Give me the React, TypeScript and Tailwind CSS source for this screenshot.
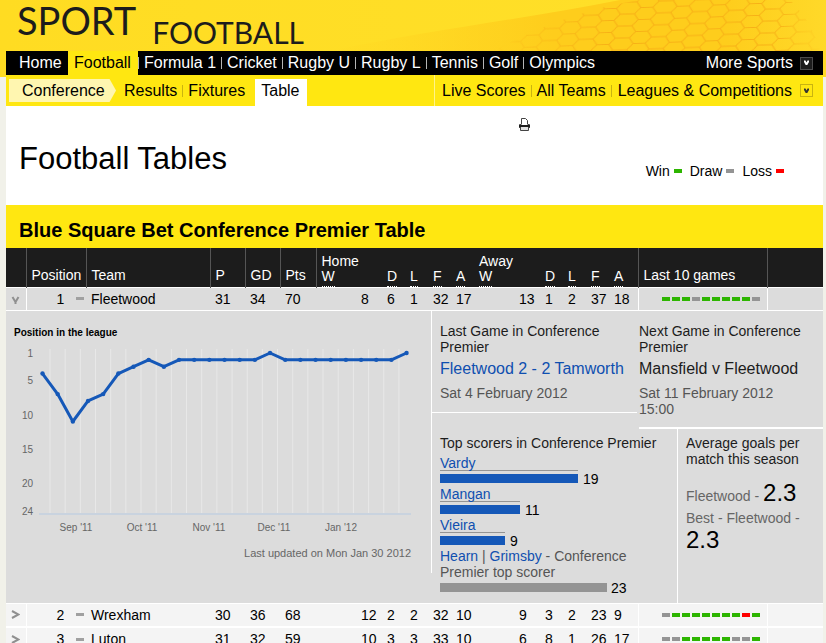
type Result = "W" | "D" | "L";

type Row = {
  position: number;
  team: string;
  stats: number[];
  form: string;
};

const NAV = ["Formula 1", "Cricket", "Rugby U", "Rugby L", "Tennis", "Golf", "Olympics"];

const ROWS: Row[] = [
  { position: 1, team: "Fleetwood", stats: [31, 34, 70, 8, 6, 1, 32, 17, 13, 1, 2, 37, 18], form: "WWWDWWWWWD" },
  { position: 2, team: "Wrexham", stats: [30, 36, 68, 12, 2, 2, 32, 10, 9, 3, 2, 23, 9], form: "DWWWWWWWLW" },
  { position: 3, team: "Luton", stats: [31, 32, 59, 10, 3, 3, 33, 10, 6, 8, 1, 26, 17], form: "DDWWWWWDDW" },
];

const SCORERS = [
  { name: "Vardy", goals: 19 },
  { name: "Mangan", goals: 11 },
  { name: "Vieira", goals: 9 },
];

const POSITIONS = [4, 7, 11, 8, 7, 4, 3, 2, 3, 2, 2, 2, 2, 2, 2, 1, 2, 2, 2, 2, 2, 2, 2, 2, 1];

const RESULT_COLOR: Record<Result, string> = {
  W: "bg-[#2db500]",
  D: "bg-[#949494]",
  L: "bg-[#ff0000]",
};

function Dash({ result }: { result: Result }) {
  return <span className={`inline-block h-1 w-2 ${RESULT_COLOR[result]}`} />;
}

function HexMesh() {
  return (
    <svg className="absolute inset-0 h-full w-full" viewBox="0 0 826 77" preserveAspectRatio="xMaxYMin slice" aria-hidden="true">
      <defs>
        <linearGradient id="swoosh" x1="0" x2="1">
          <stop offset="0" stopColor="#ffd21f" stopOpacity="0" />
          <stop offset="0.45" stopColor="#fecd1c" />
          <stop offset="0.8" stopColor="#fecd1c" />
          <stop offset="1" stopColor="#ffd929" />
        </linearGradient>
        <linearGradient id="fade" x1="0" x2="1">
          <stop offset="0" stopColor="#fff" stopOpacity="0.1" />
          <stop offset="0.35" stopColor="#fff" />
          <stop offset="0.85" stopColor="#fff" />
          <stop offset="1" stopColor="#fff" stopOpacity="0.1" />
        </linearGradient>
        <pattern id="hex" width="36" height="12" patternUnits="userSpaceOnUse" patternTransform="skewX(-14) rotate(-2)">
          <path d="M0 6H6L11 0H25L30 6H36M6 6L11 12H25L30 6" fill="none" stroke="#f7b016" strokeWidth="1" />
        </pattern>
        <mask id="mesh">
          <path d="M495 51C540 25 590 8 640 0H790C805 15 815 32 820 51Z" fill="url(#fade)" />
        </mask>
      </defs>
      <path d="M330 51C430 30 530 18 620 0H826V77H330Z" fill="url(#swoosh)" />
      <rect x="490" width="336" height="51" fill="url(#hex)" mask="url(#mesh)" />
    </svg>
  );
}

function DropButton({ label, dark }: { label: string; dark?: boolean }) {
  return (
    <button
      type="button"
      aria-label={label}
      className={`flex size-[13px] items-center justify-center border ${
        dark ? "border-[#4a4a4a] bg-[#1c1c1c] text-white" : "border-[#c9b410] text-[#333]"
      }`}
    >
      <svg viewBox="0 0 7 6" className="h-1.5 w-[7px]">
        <path d="M1 0.5H2.5L3.5 2.5L4.5 0.5H6V2L4.3 5H2.7L1 2Z" fill="currentColor" />
      </svg>
    </button>
  );
}

function MainNav() {
  return (
    <nav className="flex h-6 items-center bg-black text-[16px] leading-6 text-white">
      <a href="#" className="w-[62px] pl-[13px]">Home</a>
      <a href="#" className="w-[70px] bg-[#ffe711] pl-1.5 text-black">Football</a>
      {NAV.map((item) => (
        <a key={item} href="#" className="flex items-center whitespace-nowrap pr-[5px]">
          <span className="mr-[5px] h-3 w-px bg-[#b5b5b5]" />
          {item}
        </a>
      ))}
      <div className="ml-auto flex items-center gap-[7px] pr-2.5">
        <a href="#">More Sports</a>
        <DropButton label="More sports" dark />
      </div>
    </nav>
  );
}

function SubNav() {
  return (
    <nav className="flex h-[31px] items-start bg-[#ffe711] pt-1 text-[16px] leading-6 text-black">
      <a
        href="#"
        className="ml-[3px] h-[23px] w-[107px] bg-[#fff6b0] pl-[13px] [clip-path:polygon(0_0,94%_0,100%_50%,94%_100%,0_100%)]"
      >
        Conference
      </a>
      <a href="#" className="pl-2 pr-[5px]">Results</a>
      <span className="mt-1.5 h-3 w-px bg-[#c9b410]" />
      <a href="#" className="pl-[5px]">Fixtures</a>
      <a href="#" className="ml-2.5 h-[27px] w-[52px] bg-white pl-1.5">Table</a>
      <div className="-mt-1 ml-auto flex h-[31px] items-center whitespace-nowrap border-l border-[#fff38a] pl-[7px] pr-2.5">
        <a href="#" className="pr-[5px]">Live Scores</a>
        <span className="h-3 w-px bg-[#c9b410]" />
        <a href="#" className="px-[5px]">All Teams</a>
        <span className="h-3 w-px bg-[#c9b410]" />
        <a href="#" className="pl-1.5 pr-2">Leagues &amp; Competitions</a>
        <DropButton label="Leagues and competitions" />
      </div>
    </nav>
  );
}

function PrinterIcon() {
  return (
    <svg viewBox="0 0 11 13" className="h-[13px] w-[11px]">
      <path d="M2.5 6V.5H6.5L8.5 2.5V6" fill="#fff" stroke="#444" />
      <path d="M.5 10V6.5H2.5M8.5 6.5H10.5V10" fill="none" stroke="#444" />
      <rect x="0" y="7" width="11" height="2" fill="#1c1c1c" />
      <path d="M1.5 9V12.5H9.5V9" fill="#e0e0e0" stroke="#444" />
    </svg>
  );
}

function Toggle({ open }: { open?: boolean }) {
  return (
    <svg viewBox="0 0 9 9" className={`size-[9px] ${open ? "translate-y-0.5" : ""}`} fill="none" stroke="currentColor" strokeWidth="2">
      {open ? <path d="M1.5 1L4.5 6L7.5 1M4.5 4V8" /> : <path d="M1 1L7.5 4.5L1 8" />}
    </svg>
  );
}

function PositionChart() {
  const x = (i: number) => 36.5 + i * 15.17;
  const y = (p: number) => 6 + (p - 1) * 6.85;
  const points = POSITIONS.map((p, i) => `${x(i)},${y(p)}`).join(" ");
  const months: [string, number][] = [
    ["Sep '11", 70],
    ["Oct '11", 136],
    ["Nov '11", 203],
    ["Dec '11", 268],
    ["Jan '12", 335],
  ];

  return (
    <svg viewBox="0 0 425 190" className="h-[190px] w-[425px]" role="img" aria-label="Position in the league">
      {POSITIONS.slice(1).map((_, i) => (
        <line key={i} x1={44 + i * 15.17} x2={44 + i * 15.17} y1="2" y2="166" stroke="#e8e8e8" />
      ))}
      <line x1="33" x2="405" y1="167" y2="167" stroke="#c9d3df" strokeWidth="2" />
      <polyline points={points} fill="none" stroke="#1558b8" strokeWidth="3" strokeLinejoin="round" />
      {POSITIONS.map((p, i) => (
        <circle key={i} cx={x(i)} cy={y(p)} r="2.2" fill="#1558b8" />
      ))}
      <g fontSize="10" fill="#666" textAnchor="end">
        {[1, 5, 10, 15, 20, 24].map((p) => (
          <text key={p} x="27" y={y(p) + 4}>{p}</text>
        ))}
      </g>
      <g fontSize="10" fill="#666" textAnchor="middle">
        {months.map(([label, cx]) => (
          <text key={label} x={cx} y="184">{label}</text>
        ))}
      </g>
    </svg>
  );
}

function TeamDetail() {
  return (
    <div className="flex items-start text-[14px] leading-4 text-[#1c1c1c]">
      <div className="w-[425px] shrink-0 pt-3">
        <h3 className="pl-2 text-[10px] font-bold leading-5 text-black">Position in the league</h3>
        <div className="pt-1">
          <PositionChart />
        </div>
        <p className="pr-5 pt-2 text-right text-[11px] text-[#666]">Last updated on Mon Jan 30 2012</p>
      </div>
      <div className="flex-1">
        <div className="flex items-start">
          <section className="h-[102px] w-[206px] border-b border-l border-white pl-2 pt-3">
            <h3 className="w-[180px]">Last Game in Conference Premier</h3>
            <a href="#" className="block whitespace-nowrap pt-0.5 text-[16px] leading-6 text-[#0f4fb0]">
              Fleetwood 2 - 2 Tamworth
            </a>
            <p className="pt-1 text-[#555]">Sat 4 February 2012</p>
          </section>
          <section className="ml-0.5 h-[118px] flex-1 border-b-2 border-white pt-3">
            <h3 className="w-[180px]">Next Game in Conference Premier</h3>
            <p className="whitespace-nowrap pt-0.5 text-[16px] leading-6">Mansfield v Fleetwood</p>
            <p className="w-[150px] pt-1 text-[#555]">Sat 11 February 2012 15:00</p>
          </section>
        </div>
        <div className="flex">
          <section className="w-[247px] border-r border-white">
            <div className="-mt-4 h-40 border-l border-white pl-2 pt-[22px]">
              <h3 className="pb-1">Top scorers in Conference Premier</h3>
              {SCORERS.map((s) => {
                const width = Math.round(s.goals * 7.26);
                return (
                  <div key={s.name} className="h-[31px]">
                    <a href="#" className="block h-4 border-b border-[#949494] text-[#0f4fb0]" style={{ width }}>
                      {s.name}
                    </a>
                    <div className="flex items-center gap-[5px] text-black">
                      <span className="h-[9px] bg-[#1558b8]" style={{ width }} />
                      {s.goals}
                    </div>
                  </div>
                );
              })}
              <p className="w-[210px] text-[#555]">
                <a href="#" className="text-[#0f4fb0]">Hearn</a> | <a href="#" className="text-[#0f4fb0]">Grimsby</a> - Conference Premier top scorer
              </p>
              <div className="flex items-center gap-1 text-black">
                <span className="h-[9px] w-[167px] bg-[#949494]" />
                23
              </div>
            </div>
            <div className="h-[30px]" />
          </section>
          <section className="flex-1 pl-2 pt-1.5">
            <h3 className="w-[130px]">Average goals per match this season</h3>
            <p className="pt-3 leading-7 text-[#666]">
              Fleetwood - <span className="text-[24px] text-black">2.3</span>
            </p>
            <p className="w-[130px] text-[#666]">
              Best - Fleetwood - <span className="block text-[24px] leading-7 text-black">2.3</span>
            </p>
          </section>
        </div>
      </div>
    </div>
  );
}

function TeamRow({ row, open }: { row: Row; open?: boolean }) {
  return (
    <>
      <tr
        className={`border-white text-[14px] leading-[22px] text-black ${
          open ? "h-[23px] border-b bg-[#dcdcdc]" : "h-6 border-b-2 bg-[#f4f4f4]"
        }`}
      >
        <td className="border-r border-white pl-[5px]">
          <button type="button" aria-label={`Details for ${row.team}`} className="block text-[#909090]">
            <Toggle open={open} />
          </button>
        </td>
        <td>
          <div className="flex items-center justify-between pl-[30px] pr-0.5">
            {row.position}
            <span className="h-[3px] w-2 bg-[#a0a0a0]" />
          </div>
        </td>
        <td className="pl-[5px]">{row.team}</td>
        {row.stats.map((value, i) => (
          <td key={i} className={i === 3 || i === 8 ? "pl-[45px]" : "pl-[5px]"}>
            {value}
          </td>
        ))}
        <td className="border-x border-white">
          <div className="flex gap-0.5 pl-[23px]">
            {row.form.split("").map((r, i) => (
              <Dash key={i} result={r as Result} />
            ))}
          </div>
        </td>
        <td />
      </tr>
      {open && (
        <tr className="border-b border-white bg-[#dcdcdc]">
          <td colSpan={18}>
            <TeamDetail />
          </td>
        </tr>
      )}
    </>
  );
}

function Abbr({ children }: { children: string }) {
  return <abbr className="inline-block border-b border-dotted border-white pb-0.5 no-underline">{children}</abbr>;
}

function LeagueTable() {
  const venue = ["D", "L", "F", "A"];

  return (
    <table className="w-full table-fixed border-collapse text-left">
      <colgroup>
        <col className="w-5" />
        <col className="w-[60px]" />
        <col className="w-[124px]" />
        <col className="w-[35px]" />
        <col className="w-[35px]" />
        <col className="w-9" />
        <col className="w-[66px]" />
        <col span={4} className="w-[23px]" />
        <col className="w-[66px]" />
        <col span={3} className="w-[23px]" />
        <col className="w-[29px]" />
        <col className="w-[129px]" />
        <col />
      </colgroup>
      <thead>
        <tr className="h-[39px] border-b border-white bg-[#1c1c1c] align-bottom text-[14px] leading-[15px] text-white *:pl-[5px] *:font-normal">
          <th className="border-r border-[#555]" />
          <th className="border-r border-[#555] pb-1">Position</th>
          <th className="border-r border-[#555] pb-1">Team</th>
          <th className="border-r border-[#555] pb-1">P</th>
          <th className="border-r border-[#555] pb-1">GD</th>
          <th className="border-r border-[#555] pb-1">Pts</th>
          <th>Home<br /><Abbr>W</Abbr></th>
          {venue.map((v) => <th key={v}><Abbr>{v}</Abbr></th>)}
          <th>Away<br /><Abbr>W</Abbr></th>
          {venue.map((v) => <th key={v}><Abbr>{v}</Abbr></th>)}
          <th className="border-x border-[#555] pb-1">Last 10 games</th>
          <th />
        </tr>
      </thead>
      <tbody>
        {ROWS.map((row, i) => (
          <TeamRow key={row.team} row={row} open={i === 0} />
        ))}
      </tbody>
    </table>
  );
}

export default function App() {
  return (
    <div className="h-screen overflow-hidden bg-[#f1f1e9] font-['Liberation_Sans',Arial,sans-serif]">
      <div className="relative">
        <div className="absolute inset-x-0 top-0 h-[77px] bg-linear-to-r from-[#ffdc22] to-[#ffe02a]">
          <HexMesh />
        </div>
        <header className="relative flex h-[51px] items-start gap-4 pl-[17px] font-['Lato',sans-serif] text-[#1c1c1c]">
          <span className="text-[38px] leading-10">SPORT</span>
          <h1 className="pt-3.5 text-[30px] leading-9">FOOTBALL</h1>
        </header>
        <div className="relative ml-1.5 mr-[3px] bg-white">
          <MainNav />
          <SubNav />
          <div className="flex h-[99px] flex-col pt-3">
            <button type="button" aria-label="Print" className="ml-[513px] self-start">
              <PrinterIcon />
            </button>
            <div className="flex items-start justify-between pl-[13px] pr-[39px]">
              <h2 className="pt-1.5 text-[31px] leading-[44px] text-black">Football Tables</h2>
              <ul className="flex gap-2 pt-8 text-[14px] leading-4 text-black">
                <li className="flex items-center gap-1">Win <Dash result="W" /></li>
                <li className="flex items-center gap-1">Draw <Dash result="D" /></li>
                <li className="flex items-center gap-1">Loss <Dash result="L" /></li>
              </ul>
            </div>
          </div>
          <h2 className="h-[43px] bg-[#ffe711] pl-[13px] pt-1 text-[20px] font-bold leading-[42px] text-black">
            Blue Square Bet Conference Premier Table
          </h2>
          <LeagueTable />
        </div>
      </div>
    </div>
  );
}
